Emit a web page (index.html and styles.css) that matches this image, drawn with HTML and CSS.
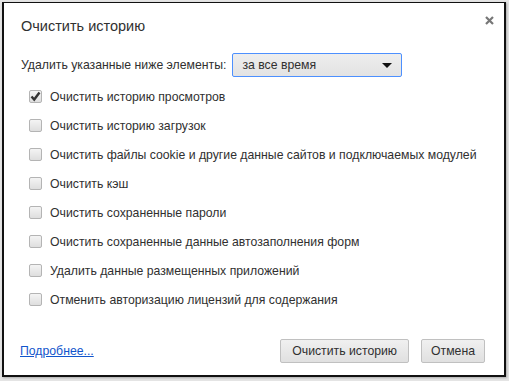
FILE: index.html
```html
<!DOCTYPE html>
<html lang="ru">
  <head>
    <meta charset="UTF-8" />
    <title>Очистить историю</title>
    <link rel="stylesheet" href="styles.css">
  </head>
  <body>
    <div class="dialog">
      <header>
        <h1 class="title">Очистить историю</h1>
        <span class="close" title="Закрыть">
          <svg width="9" height="9" viewBox="0 0 9 9">
            <path d="M1 1 L8 8 M8 1 L1 8" stroke="#777" stroke-width="2.2" />
          </svg>
        </span>
      </header>

      <div class="period">
        <span>Удалить указанные ниже элементы:</span>
        <div class="select">
          <span>за все время</span>
          <span class="arrow"></span>
        </div>
      </div>

      <ul class="options">
        <li><span class="check checked"><svg width="11" height="11" viewBox="0 0 11 11"><path d="M1.5 5.5 L4.2 8.5 L9.5 1.5" fill="none" stroke="#333" stroke-width="2.4" /></svg></span>Очистить историю просмотров</li>
        <li><span class="check"></span>Очистить историю загрузок</li>
        <li><span class="check"></span>Очистить файлы cookie и другие данные сайтов и подключаемых модулей</li>
        <li><span class="check"></span>Очистить кэш</li>
        <li><span class="check"></span>Очистить сохраненные пароли</li>
        <li><span class="check"></span>Очистить сохраненные данные автозаполнения форм</li>
        <li><span class="check"></span>Удалить данные размещенных приложений</li>
        <li><span class="check"></span>Отменить авторизацию лицензий для содержания</li>
      </ul>

      <footer>
        <a href="#" class="more">Подробнее...</a>
        <div class="buttons">
          <button>Очистить историю</button>
          <button class="cancel">Отмена</button>
        </div>
      </footer>
    </div>
  </body>
</html>
```

FILE: styles.css
```css
* {
  box-sizing: border-box;
}

html,
body {
  background-color: #e4e4e4;
  color: #303030;
  font-family: "Liberation Sans", Arial, sans-serif;
  font-size: 12.25px;
  height: 100%;
  margin: 0;
  overflow: hidden;
}

body {
  padding: 2px 0 0 2px;
}

.dialog {
  background-color: #fff;
  border: 2px solid #111;
  border-top-width: 1px;
  box-shadow: 1px 1px 2px rgba(0, 0, 0, 0.25);
  display: flex;
  flex-direction: column;
  height: 375px;
  padding: 0 19px 12px 16px;
  width: 504px;
}

header {
  align-items: flex-start;
  display: flex;
  justify-content: space-between;
  margin-right: -9px;
}

.title {
  font-size: 14.5px;
  font-weight: normal;
  line-height: 20px;
  margin: 13px 0 0 1px;
}

.close {
  display: block;
  height: 9px;
  margin-top: 13px;
  width: 9px;
}

.close svg {
  display: block;
}

.period {
  align-items: center;
  display: flex;
  gap: 6px;
  margin-top: 17px;
  padding-left: 1px;
}

.select {
  align-items: center;
  background: linear-gradient(#eeeeee, #e3e3e3);
  border: 1px solid #4d90fe;
  border-radius: 2px;
  display: flex;
  height: 24px;
  justify-content: space-between;
  padding: 0 9px 0 9px;
  width: 170px;
}

.arrow {
  border-left: 5px solid transparent;
  border-right: 5px solid transparent;
  border-top: 5px solid #111;
  height: 0;
  width: 0;
}

.options {
  list-style: none;
  margin: 5px 0 0 0;
  padding: 0 0 0 9px;
}

.options li {
  align-items: center;
  display: flex;
  gap: 8px;
  height: 29px;
  white-space: nowrap;
}

.check {
  align-items: center;
  background: linear-gradient(#f4f4f4, #dedede);
  border: 1px solid #b4b4b4;
  border-radius: 2px;
  display: flex;
  flex-shrink: 0;
  height: 13px;
  justify-content: center;
  width: 13px;
}

.check svg {
  display: block;
}

footer {
  align-items: center;
  display: flex;
  justify-content: space-between;
  margin-top: auto;
}

.more {
  color: #1155cc;
  margin-left: 0;
}

.buttons {
  display: flex;
  gap: 12px;
}

button {
  background: linear-gradient(#f0f0f0, #e0e0e0);
  border: 1px solid #c0c0c0;
  border-radius: 2px;
  color: #303030;
  font-family: inherit;
  font-size: 12.25px;
  height: 24px;
  padding: 0 11px;
}

button.cancel {
  padding: 0 9px;
}
```
